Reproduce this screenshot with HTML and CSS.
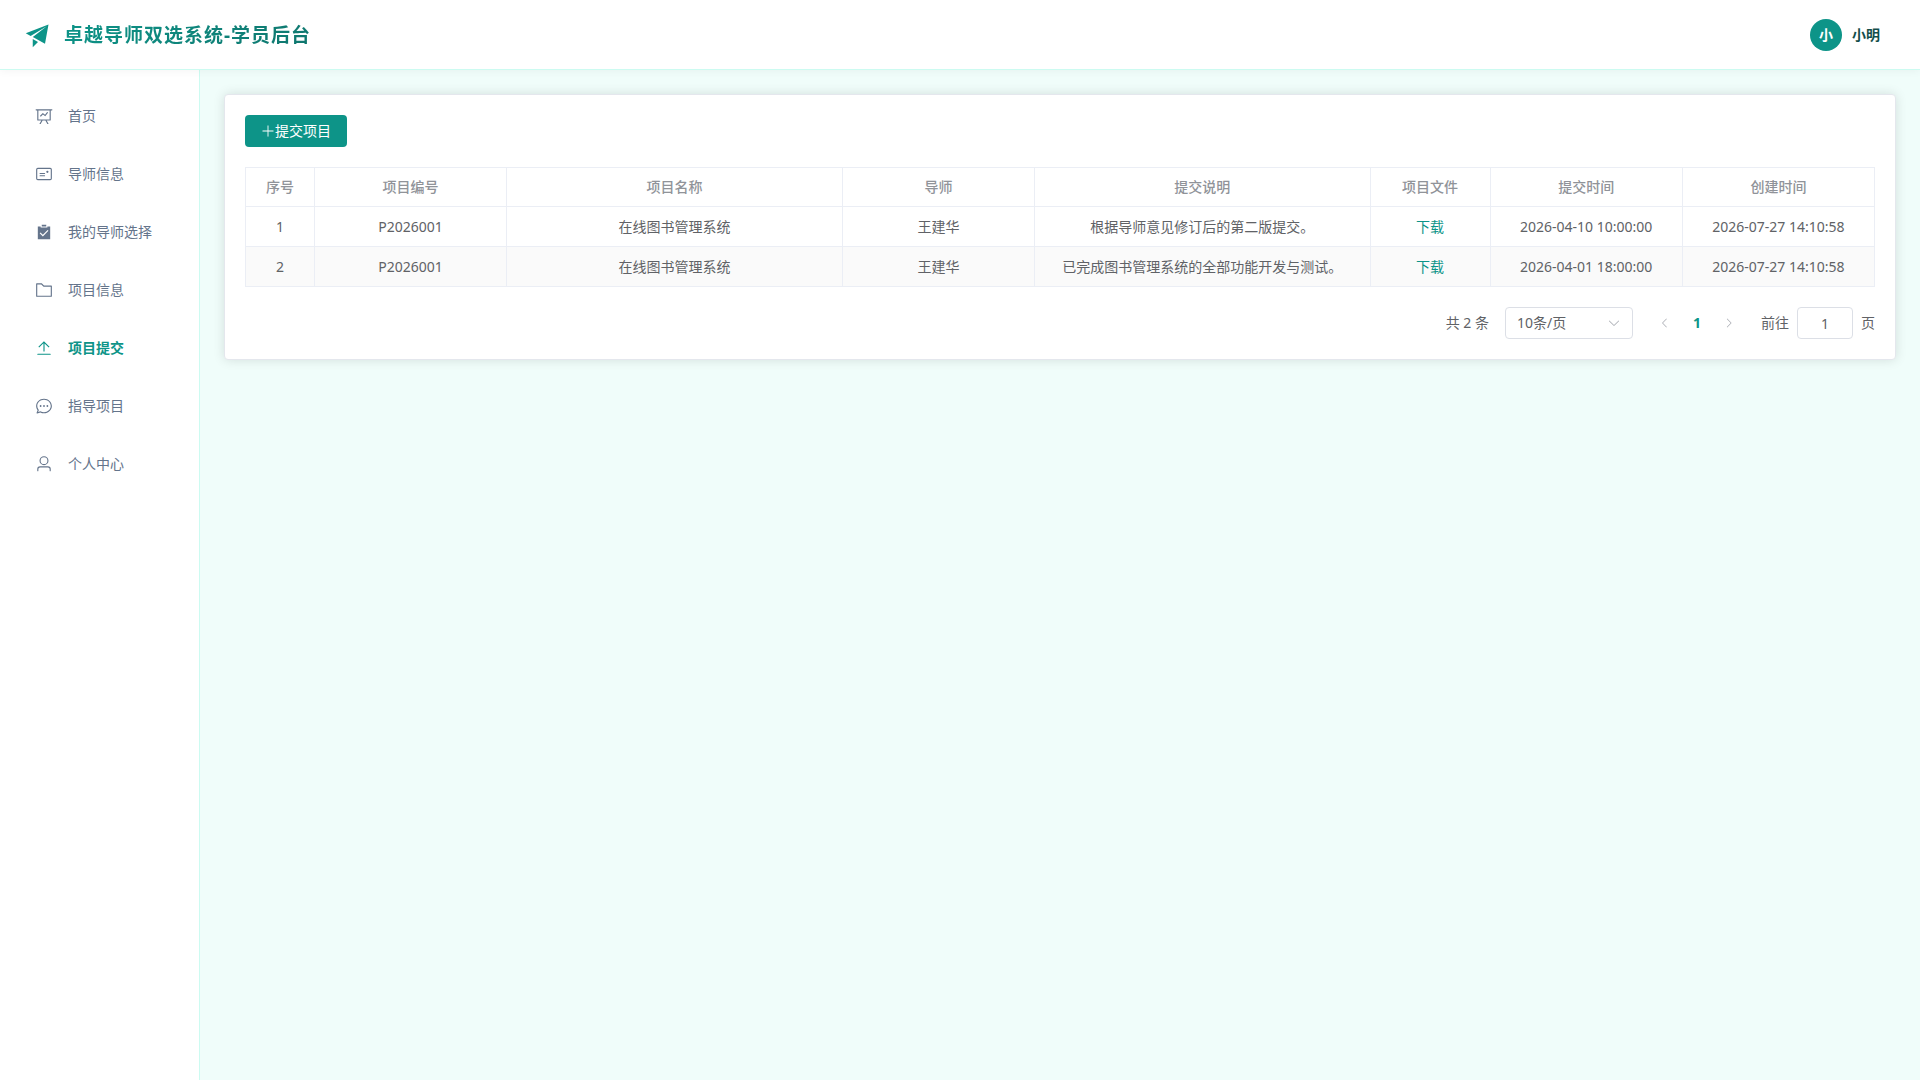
FILE: index.html
```html
<!DOCTYPE html>
<html lang="zh-CN">
<head>
<meta charset="utf-8">
<meta name="viewport" content="width=device-width, initial-scale=1">
<title>卓越导师双选系统-学员后台</title>
<link rel="stylesheet" href="styles.css">
</head>
<body>
<header class="header">
  <div class="brand">
    <svg class="brand-icon" viewBox="0 0 1024 1024" aria-hidden="true"><path d="m64 448 832-320-128 704-446.08-243.328L832 192 242.816 545.472zm256 512V657.024L512 768z"/></svg>
    <h1 class="brand-title">卓越导师双选系统-学员后台</h1>
  </div>
  <button class="user" type="button">
    <span class="avatar">小</span>
    <span>小明</span>
  </button>
</header>
<div class="layout">
  <nav class="sidebar">
    <a class="nav-item" href="#home">
      <svg class="nav-icon" viewBox="0 0 1024 1024" aria-hidden="true"><path d="M359.168 768H160a32 32 0 0 1-32-32V192H64a32 32 0 0 1 0-64h896a32 32 0 1 1 0 64h-64v544a32 32 0 0 1-32 32H665.216l110.848 192h-73.856L591.36 768H433.024L322.176 960H248.32zM832 192H192v512h640zM342.656 534.656a32 32 0 1 1-45.312-45.312L444.992 341.76l125.44 94.08L679.04 300.032a32 32 0 1 1 49.92 39.936L581.632 524.224 451.008 426.24 342.656 534.592z"/></svg>
      <span>首页</span>
    </a>
    <a class="nav-item" href="#tutors">
      <svg class="nav-icon" viewBox="0 0 1024 1024" aria-hidden="true"><path d="M160 224a32 32 0 0 0-32 32v512a32 32 0 0 0 32 32h704a32 32 0 0 0 32-32V256a32 32 0 0 0-32-32zm0-64h704a96 96 0 0 1 96 96v512a96 96 0 0 1-96 96H160a96 96 0 0 1-96-96V256a96 96 0 0 1 96-96"/><path d="M704 320a64 64 0 1 1 0 128 64 64 0 0 1 0-128M288 448h256q32 0 32 32t-32 32H288q-32 0-32-32t32-32m0 128h256q32 0 32 32t-32 32H288q-32 0-32-32t32-32"/></svg>
      <span>导师信息</span>
    </a>
    <a class="nav-item" href="#choice">
      <svg class="nav-icon" viewBox="0 0 1024 1024" aria-hidden="true"><path fill-rule="evenodd" d="M704 192h160v736H160V192h160v64h384zM311.616 537.28l-45.312 45.248L447.36 763.52l316.8-316.8-45.312-45.184L447.36 673.024zM384 192V96h256v96z"/></svg>
      <span>我的导师选择</span>
    </a>
    <a class="nav-item" href="#projects">
      <svg class="nav-icon" viewBox="0 0 1024 1024" aria-hidden="true"><path d="M128 192v640h768V320H485.76L357.504 192zm-32-64h287.872l128.384 128H928a32 32 0 0 1 32 32v576a32 32 0 0 1-32 32H96a32 32 0 0 1-32-32V160a32 32 0 0 1 32-32"/></svg>
      <span>项目信息</span>
    </a>
    <a class="nav-item is-active" href="#submit" aria-current="page">
      <svg class="nav-icon" viewBox="0 0 1024 1024" aria-hidden="true"><path d="M160 832h704a32 32 0 1 1 0 64H160a32 32 0 1 1 0-64m384-578.304V704h-64V247.296L237.248 490.048 192 444.8 508.8 128l316.8 316.8-45.312 45.248z"/></svg>
      <span>项目提交</span>
    </a>
    <a class="nav-item" href="#guidance">
      <svg class="nav-icon" viewBox="0 0 1024 1024" aria-hidden="true"><path d="m174.72 855.68 135.296-45.12 23.68 11.84C388.096 849.536 448.576 864 512 864c211.84 0 384-166.784 384-352S723.84 160 512 160 128 326.784 128 512c0 69.12 24.96 139.264 70.848 199.232l22.08 28.8-46.272 115.584zm-45.248 82.56A32 32 0 0 1 89.6 896l58.368-145.92C94.72 680.32 64 596.864 64 512 64 299.904 256 96 512 96s448 203.904 448 416-192 416-448 416a461.056 461.056 0 0 1-206.912-48.384l-175.616 58.56z"/><path d="M512 563.2a51.2 51.2 0 1 1 0-102.4 51.2 51.2 0 0 1 0 102.4m192 0a51.2 51.2 0 1 1 0-102.4 51.2 51.2 0 0 1 0 102.4m-384 0a51.2 51.2 0 1 1 0-102.4 51.2 51.2 0 0 1 0 102.4"/></svg>
      <span>指导项目</span>
    </a>
    <a class="nav-item" href="#profile">
      <svg class="nav-icon" viewBox="0 0 1024 1024" aria-hidden="true"><path d="M512 512a192 192 0 1 0 0-384 192 192 0 0 0 0 384m0 64a256 256 0 1 1 0-512 256 256 0 0 1 0 512m320 320v-96a96 96 0 0 0-96-96H288a96 96 0 0 0-96 96v96a32 32 0 1 1-64 0v-96a160 160 0 0 1 160-160h448a160 160 0 0 1 160 160v96a32 32 0 1 1-64 0"/></svg>
      <span>个人中心</span>
    </a>
  </nav>
  <main class="main">
    <section class="card">
      <button class="btn-primary" type="button">
        <svg class="btn-icon" viewBox="0 0 1024 1024" aria-hidden="true"><path d="M480 480V128a32 32 0 0 1 64 0v352h352a32 32 0 1 1 0 64H544v352a32 32 0 1 1-64 0V544H128a32 32 0 0 1 0-64z"/></svg>
        <span>提交项目</span>
      </button>
      <table class="table">
        <colgroup>
          <col class="col-index">
          <col class="col-mid">
          <col class="col-wide">
          <col class="col-mid">
          <col class="col-wide">
          <col class="col-file">
          <col class="col-mid">
          <col>
        </colgroup>
        <thead>
          <tr>
            <th scope="col">序号</th>
            <th scope="col">项目编号</th>
            <th scope="col">项目名称</th>
            <th scope="col">导师</th>
            <th scope="col">提交说明</th>
            <th scope="col">项目文件</th>
            <th scope="col">提交时间</th>
            <th scope="col">创建时间</th>
          </tr>
        </thead>
        <tbody>
          <tr>
            <td>1</td>
            <td>P2026001</td>
            <td>在线图书管理系统</td>
            <td>王建华</td>
            <td>根据导师意见修订后的第二版提交。</td>
            <td><a class="link" href="#file-1">下载</a></td>
            <td>2026-04-10 10:00:00</td>
            <td>2026-07-27 14:10:58</td>
          </tr>
          <tr>
            <td>2</td>
            <td>P2026001</td>
            <td>在线图书管理系统</td>
            <td>王建华</td>
            <td>已完成图书管理系统的全部功能开发与测试。</td>
            <td><a class="link" href="#file-2">下载</a></td>
            <td>2026-04-01 18:00:00</td>
            <td>2026-07-27 14:10:58</td>
          </tr>
        </tbody>
      </table>
      <div class="pagination">
        <span>共 2 条</span>
        <div class="page-size">
          <select class="page-size-select" aria-label="每页条数">
            <option>10条/页</option>
            <option>20条/页</option>
            <option>50条/页</option>
          </select>
          <svg class="page-size-arrow" viewBox="0 0 1024 1024" aria-hidden="true"><path d="M831.872 340.864 512 652.672 192.128 340.864a30.592 30.592 0 0 0-42.752 0 29.12 29.12 0 0 0 0 41.6L489.664 714.24a32 32 0 0 0 44.672 0l340.288-331.712a29.12 29.12 0 0 0 0-41.728 30.592 30.592 0 0 0-42.752 0z"/></svg>
        </div>
        <div class="pager">
          <button class="pager-btn" type="button" disabled aria-label="上一页">
            <svg class="pager-icon" viewBox="0 0 1024 1024" aria-hidden="true"><path d="M609.408 149.376 277.76 489.6a32 32 0 0 0 0 44.672l331.648 340.352a29.12 29.12 0 0 0 41.728 0 30.592 30.592 0 0 0 0-42.752L339.264 511.936l311.872-319.872a30.592 30.592 0 0 0 0-42.688 29.12 29.12 0 0 0-41.728 0z"/></svg>
          </button>
          <button class="pager-btn is-current" type="button" aria-current="true">1</button>
          <button class="pager-btn" type="button" disabled aria-label="下一页">
            <svg class="pager-icon" viewBox="0 0 1024 1024" aria-hidden="true"><path d="M340.864 149.312a30.592 30.592 0 0 0 0 42.752L652.736 512 340.864 831.872a30.592 30.592 0 0 0 0 42.752 29.12 29.12 0 0 0 41.728 0L714.24 534.336a32 32 0 0 0 0-44.672L382.592 149.376a29.12 29.12 0 0 0-41.728 0z"/></svg>
          </button>
        </div>
        <div class="jumper">
          <label for="jump-page">前往</label>
          <input class="jumper-input" id="jump-page" type="text" inputmode="numeric" value="1">
          <span>页</span>
        </div>
      </div>
    </section>
  </main>
</div>
</body>
</html>
```
FILE: styles.css
```css
* {
  box-sizing: border-box;
}

body {
  margin: 0;
  min-height: 100vh;
  display: flex;
  flex-direction: column;
  background: #f0fdfa;
  color: #606266;
  font-family: "Noto Sans", "Noto Sans CJK SC", sans-serif;
  font-size: 14px;
  line-height: 22px;
}

button,
input,
select {
  font: inherit;
  color: inherit;
}

svg {
  display: block;
  fill: currentColor;
}

a {
  text-decoration: none;
}

/* Header */
.header {
  position: relative;
  z-index: 1;
  display: flex;
  align-items: center;
  justify-content: space-between;
  height: 70px;
  padding: 0 24px;
  background: #fff;
  border-bottom: 1px solid #ccfbf1;
  box-shadow: 0 2px 8px rgba(0, 0, 0, 0.04);
}

.brand {
  display: flex;
  align-items: center;
  gap: 12px;
  color: #0d9488;
}

.brand-icon {
  width: 28px;
  height: 28px;
}

.brand-title {
  margin: 0;
  font-size: 19px;
  font-weight: 700;
  line-height: 28px;
  letter-spacing: 1px;
  color: transparent;
  background: linear-gradient(135deg, #0d9488, #0f766e);
  background-clip: text;
  -webkit-background-clip: text;
}

.user {
  display: flex;
  align-items: center;
  gap: 10px;
  padding: 0 16px;
  border: 0;
  background: none;
  color: #134e4a;
  font-weight: 600;
  cursor: pointer;
}

.avatar {
  display: grid;
  place-items: center;
  width: 32px;
  height: 32px;
  border-radius: 50%;
  background: #0d9488;
  color: #fff;
}

/* Layout */
.layout {
  flex: 1;
  display: flex;
}

.sidebar {
  flex: none;
  display: flex;
  flex-direction: column;
  gap: 6px;
  width: 200px;
  padding: 20px 12px;
  background: #fff;
  border-right: 1px solid #ccfbf1;
}

.nav-item {
  display: flex;
  align-items: center;
  gap: 15px;
  height: 52px;
  padding: 0 23px;
  color: #64748b;
  white-space: nowrap;
}

.nav-item.is-active {
  color: #0d9488;
  font-weight: 600;
}

.nav-icon {
  flex: none;
  width: 18px;
  height: 18px;
}

.main {
  flex: 1;
  min-width: 0;
  padding: 24px;
}

.card {
  padding: 20px;
  background: #fff;
  border: 1px solid #e4e7ed;
  border-radius: 4px;
  box-shadow: 0 0 12px rgba(0, 0, 0, 0.12);
}

.btn-primary {
  display: flex;
  align-items: center;
  height: 32px;
  padding: 0 16px;
  border: 0;
  border-radius: 4px;
  background: #0d9488;
  color: #fff;
  cursor: pointer;
}

.btn-icon {
  width: 14px;
  height: 14px;
}

/* Table */
.table {
  width: 100%;
  margin: 20px 0;
  table-layout: fixed;
  border-collapse: separate;
  border-spacing: 0;
  border-top: 1px solid #ebeef5;
  border-left: 1px solid #ebeef5;
  text-align: center;
}

.table th,
.table td {
  padding: 8px 12px;
  border-right: 1px solid #ebeef5;
  border-bottom: 1px solid #ebeef5;
  line-height: 23px;
}

.table th {
  color: #909399;
  font-weight: 500;
  line-height: 22px;
}

.table tbody tr:nth-child(even) {
  background: #fafafa;
}

.col-index {
  width: 69px;
}

.col-file {
  width: 120px;
}

.col-mid {
  width: 11.8%;
}

.col-wide {
  width: 20.6%;
}

.link {
  color: #0d9488;
}

/* Pagination */
.pagination {
  display: flex;
  align-items: center;
  justify-content: flex-end;
  gap: 16px;
}

.page-size {
  position: relative;
  width: 128px;
}

.page-size-select {
  width: 100%;
  height: 32px;
  padding: 0 32px 0 11px;
  appearance: none;
  border: 1px solid #dcdfe6;
  border-radius: 4px;
  background: #fff;
}

.page-size-arrow {
  position: absolute;
  top: 9px;
  right: 12px;
  width: 14px;
  height: 14px;
  color: #a8abb2;
  pointer-events: none;
}

.pager {
  display: flex;
}

.pager-btn {
  display: grid;
  place-items: center;
  width: 32px;
  height: 32px;
  padding: 0;
  border: 0;
  background: none;
}

.pager-btn:disabled {
  color: #a8abb2;
}

.pager-btn.is-current {
  color: #0d9488;
  font-weight: 700;
}

.pager-icon {
  width: 12px;
  height: 12px;
}

.jumper {
  display: flex;
  align-items: center;
  gap: 8px;
}

.jumper-input {
  width: 56px;
  height: 32px;
  padding: 0 11px;
  border: 1px solid #dcdfe6;
  border-radius: 4px;
  background: #fff;
  text-align: center;
}
```
